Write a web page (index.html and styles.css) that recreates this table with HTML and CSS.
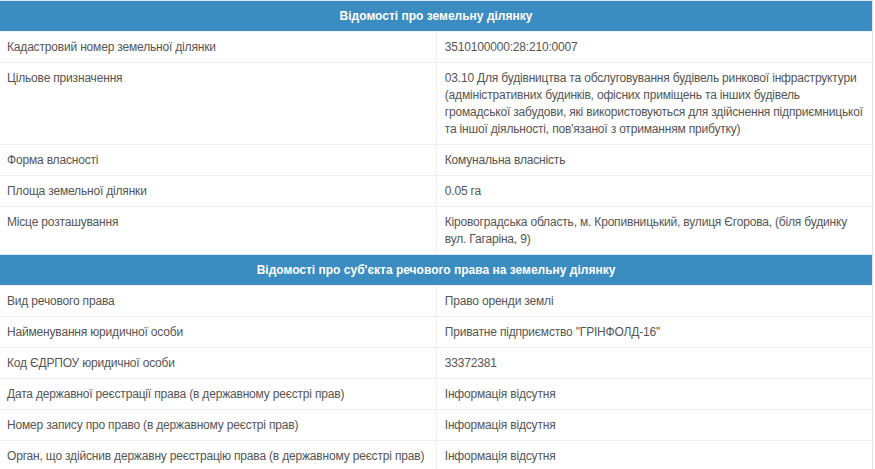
FILE: index.html
```html
<!DOCTYPE html>
<html lang="uk">
<head>
    <meta charset="UTF-8">
    <meta name="viewport" content="width=device-width, initial-scale=1.0">
    <title>Відомості про земельну ділянку</title>
    <link rel="stylesheet" href="styles.css">
</head>
<body>
    <table class="info-table">
        <tbody>
            <tr class="section">
                <th colspan="2">Відомості про земельну ділянку</th>
            </tr>
            <tr>
                <td class="label">Кадастровий номер земельної ділянки</td>
                <td>3510100000:28:210:0007</td>
            </tr>
            <tr>
                <td class="label">Цільове призначення</td>
                <td>03.10 Для будівництва та обслуговування будівель ринкової інфраструктури (адміністративних будинків, офісних приміщень та інших будівель громадської забудови, які використовуються для здійснення підприємницької та іншої діяльності, пов'язаної з отриманням прибутку)</td>
            </tr>
            <tr>
                <td class="label">Форма власності</td>
                <td>Комунальна власність</td>
            </tr>
            <tr>
                <td class="label">Площа земельної ділянки</td>
                <td>0.05 га</td>
            </tr>
            <tr>
                <td class="label">Місце розташування</td>
                <td>Кіровоградська область, м. Кропивницький, вулиця Єгорова, (біля будинку вул. Гагаріна, 9)</td>
            </tr>
            <tr class="section">
                <th colspan="2">Відомості про суб'єкта речового права на земельну ділянку</th>
            </tr>
            <tr>
                <td class="label">Вид речового права</td>
                <td>Право оренди землі</td>
            </tr>
            <tr>
                <td class="label">Найменування юридичної особи</td>
                <td>Приватне підприємство "ГРІНФОЛД-16"</td>
            </tr>
            <tr>
                <td class="label">Код ЄДРПОУ юридичної особи</td>
                <td>33372381</td>
            </tr>
            <tr>
                <td class="label">Дата державної реєстрації права (в державному реєстрі прав)</td>
                <td>Інформація відсутня</td>
            </tr>
            <tr>
                <td class="label">Номер запису про право (в державному реєстрі прав)</td>
                <td>Інформація відсутня</td>
            </tr>
            <tr>
                <td class="label">Орган, що здійснив державну реєстрацію права (в державному реєстрі прав)</td>
                <td>Інформація відсутня</td>
            </tr>
        </tbody>
    </table>
</body>
</html>
```

FILE: styles.css
```css
body {
    margin: 0;
    background: #fff;
    font-family: "Liberation Sans", Arial, sans-serif;
    font-size: 12px;
    color: #555;
}
.info-table {
    width: 873px;
    border-collapse: collapse;
    table-layout: fixed;
    border-right: 1px solid #e4e4e4;
}
.info-table th,
.info-table td {
    padding: 7px 5px 6px 8px;
    line-height: 17px;
    text-align: left;
    vertical-align: top;
    border-top: 1px solid #f0f0f0;
}
.info-table td {
    letter-spacing: -0.18px;
}
.info-table td.label {
    width: 422px;
    padding-left: 7px;
    border-right: 1px solid #f0f0f0;
}
.section th {
    background: #3b8cc0;
    color: #fff;
    font-weight: bold;
    text-align: center;
    padding: 7px 8px 6px;
    border-top: 1px solid #d6e7f3;
}
```
